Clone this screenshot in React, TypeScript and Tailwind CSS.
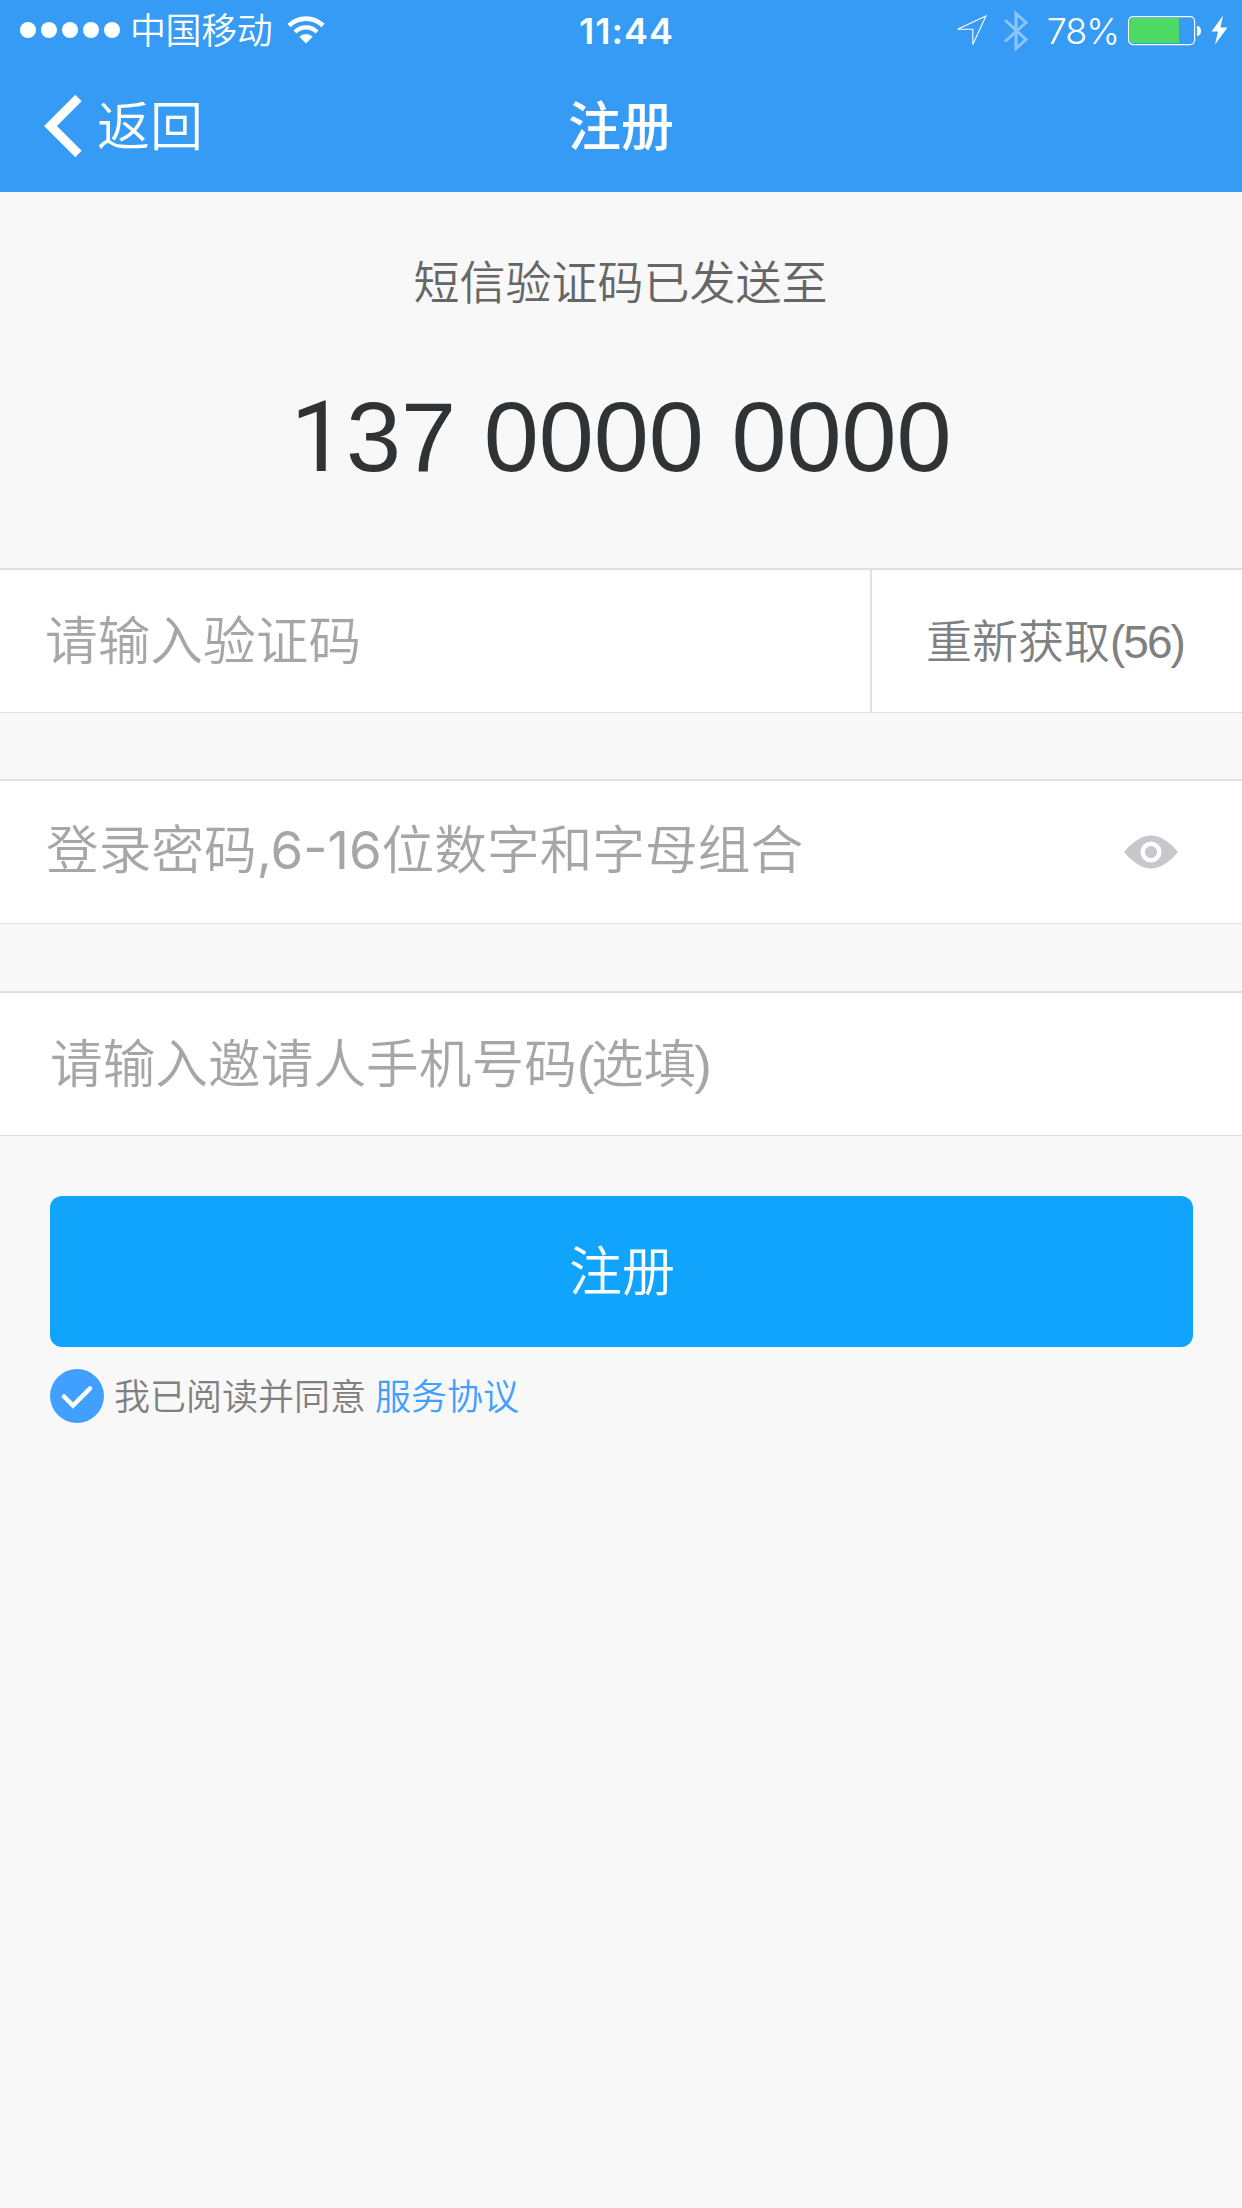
import type { ReactNode } from "react";

const cjk = "font-['Liberation_Sans','Noto_Sans_CJK_SC',sans-serif]";
const inter = "font-['Inter','Noto_Sans_CJK_SC',sans-serif]";

function StatusBar() {
  return (
    <div className="grid h-[60px] grid-cols-[1fr_auto_1fr] items-center">
      <div className="flex items-center pl-5">
        <div className="flex gap-[5px]">
          {[0, 1, 2, 3, 4].map((i) => (
            <span key={i} className="size-4 rounded-full bg-white" />
          ))}
        </div>
        <span className={`ml-[10px] pt-[3px] text-[36px] leading-[57px] font-[350] tracking-[-0.4px] ${cjk}`}>中国移动</span>
        <svg className="ml-[15px]" width="38" height="28" viewBox="0 0 38 28" fill="none">
          <path d="M2 9.5A24.5 24.5 0 0 1 36 9.5" stroke="#fff" strokeWidth="4.6" />
          <path d="M8 16A15.5 15.5 0 0 1 30 16" stroke="#fff" strokeWidth="4.4" />
          <path d="M19 27.5L12.3 20.8A9.4 9.4 0 0 1 25.7 20.8Z" fill="#fff" />
        </svg>
      </div>
      <span className={`pt-[2px] pl-[11px] text-[36px] leading-[58px] font-semibold tracking-[1px] ${inter}`}>11:44</span>
      <div className="flex items-center justify-end pr-[14px]">
        <svg width="32" height="32" viewBox="0 0 32 32" fill="none">
          <path d="M30 2L1.5 15.2L16.8 15.2L16.8 30.5Z" stroke="#fff" strokeWidth="1.1" />
        </svg>
        <svg className="mt-[2px] ml-4" width="24" height="42" viewBox="0 0 24 42" fill="none">
          <path d="M1 10L22 29.5L12 38.5V3.5L22 12.5L1 31.5" stroke="#8bc5fb" strokeWidth="3" />
        </svg>
        <span className={`ml-[19px] pt-[2px] text-[36px] leading-[58px] font-[350] tracking-[-1px] ${inter}`}>78%</span>
        <svg className="mt-[2px] ml-[9px]" width="74" height="30" viewBox="0 0 74 30" fill="none">
          <path d="M5.5 2H51V27H5.5Q2 27 2 23.5V5.5Q2 2 5.5 2Z" fill="#4cd964" />
          <rect x="0.6" y="0.6" width="66" height="28" rx="4.5" stroke="#fff" strokeWidth="1.2" />
          <path d="M69 9.8Q73 10.5 73 15Q73 19.5 69 20.2Z" fill="#fff" />
        </svg>
        <svg className="ml-[9px]" width="17" height="30" viewBox="0 0 17 30">
          <path d="M12 0.5L0.5 16.5H7L4 29.5L16.5 12.5H9.5Z" fill="#fff" />
        </svg>
      </div>
    </div>
  );
}

function NavBar() {
  return (
    <div className="grid h-[132px] grid-cols-[1fr_auto_1fr] items-center">
      <div className="flex items-center pl-[44px]">
        <svg className="mb-px" width="39" height="64" viewBox="0 0 39 64" fill="none">
          <path d="M34.5 4L6.5 32L34.5 60" stroke="#fff" strokeWidth="9" />
        </svg>
        <span className={`ml-[14px] pt-[3px] text-[53px] leading-[129px] font-[350] ${cjk}`}>返回</span>
      </div>
      <h1 className={`pt-[3px] text-[53px] leading-[129px] font-medium ${cjk}`}>注册</h1>
      <div />
    </div>
  );
}

function Field({ className, children }: { className: string; children: ReactNode }) {
  return (
    <div className={`flex h-[145px] items-center border-t-2 border-b border-[#dfdfeb] bg-white text-[#a6a6a6] ${className}`}>
      {children}
    </div>
  );
}

export default function App() {
  return (
    <div className={`flex min-h-[2208px] w-[1242px] flex-col overflow-hidden bg-[#f8f8f8] font-[350] ${cjk}`}>
      <header className="h-[192px] bg-[#369bf4] text-white">
        <StatusBar />
        <NavBar />
      </header>

      <p className="mt-[51px] pr-px text-center text-[46px] leading-[80px] text-[#666]">短信验证码已发送至</p>
      <p className="mt-[54px] text-center text-[99px] leading-[120px] font-normal text-[#303234]">
        <span className="font-['Roboto',sans-serif]">1</span>37 0000 0000
      </p>

      <Field className="mt-[71px]">
        <div className="flex-1 pt-[2px] pl-[45px] text-[52.7px] leading-[140px]">请输入验证码</div>
        <div className="flex h-full w-[372px] items-center border-l-2 border-[#dfdfeb] pt-[3px] pl-[54px] text-[46px] text-[#808080]">
          重新获取<span className="tracking-[-2px]">(56)</span>
        </div>
      </Field>

      <Field className="mt-[66px]">
        <div className={`flex-1 pb-[3px] pl-[46px] text-[52.7px] leading-[139px] ${inter}`}>
          登录密码<span className="font-normal">,6-16</span>位数字和字母组合
        </div>
        <svg className="mr-[63px]" width="56" height="34" viewBox="0 0 56 34">
          <path d="M1 17Q15 0.5 28 0.5Q41 0.5 55 17Q41 33.5 28 33.5Q15 33.5 1 17Z" fill="#c7c7cc" />
          <circle cx="28" cy="17" r="8.3" fill="#c7c7cc" stroke="#fff" strokeWidth="4.4" />
        </svg>
      </Field>

      <Field className="mt-[67px]">
        <div className="flex-1 pt-[2px] pl-[50px] text-[52.7px] leading-[140px]">
          请输入邀请人手机号码<span className="tracking-[-3.5px]">(</span>选填<span className="-ml-[2px]">)</span>
        </div>
      </Field>

      <button className="mt-[60px] mr-[49px] ml-[50px] h-[151px] rounded-xl bg-[#10a4fd] pt-[2px] pl-px text-[53px] leading-[149px] text-white">
        注册
      </button>

      <div className="mt-[22px] ml-[50px] flex h-[54px] items-center text-[36px] text-[#808080]">
        <svg width="54" height="54" viewBox="0 0 54 54" fill="none">
          <circle cx="27" cy="27" r="27" fill="#419fff" />
          <path d="M14 27.5L23 36.5L40 19.5" stroke="#fff" strokeWidth="4.5" strokeLinecap="round" />
        </svg>
        <span className="ml-[10px] pt-[3px]">我已阅读并同意</span>
        <a className="ml-[9px] pt-[3px] text-[#419fff]">服务协议</a>
      </div>
    </div>
  );
}
